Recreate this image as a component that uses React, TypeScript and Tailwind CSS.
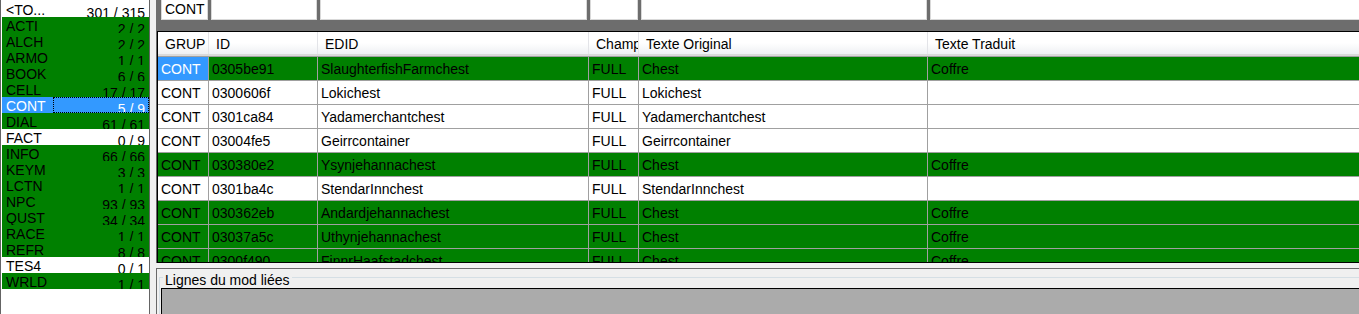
import React from "react";

type Grp = { l: string; n: string; k: "w" | "g" | "s" };
const groups: Grp[] = [
  { l: "<TO...", n: "301 / 315", k: "w" },
  { l: "ACTI", n: "2 / 2", k: "g" },
  { l: "ALCH", n: "2 / 2", k: "g" },
  { l: "ARMO", n: "1 / 1", k: "g" },
  { l: "BOOK", n: "6 / 6", k: "g" },
  { l: "CELL", n: "17 / 17", k: "g" },
  { l: "CONT", n: "5 / 9", k: "s" },
  { l: "DIAL", n: "61 / 61", k: "g" },
  { l: "FACT", n: "0 / 9", k: "w" },
  { l: "INFO", n: "66 / 66", k: "g" },
  { l: "KEYM", n: "3 / 3", k: "g" },
  { l: "LCTN", n: "1 / 1", k: "g" },
  { l: "NPC", n: "93 / 93", k: "g" },
  { l: "QUST", n: "34 / 34", k: "g" },
  { l: "RACE", n: "1 / 1", k: "g" },
  { l: "REFR", n: "8 / 8", k: "g" },
  { l: "TES4", n: "0 / 1", k: "w" },
  { l: "WRLD", n: "1 / 1", k: "g" },
];

type Row = { id: string; edid: string; orig: string; trad: string; g: boolean };
const rows: Row[] = [
  { id: "0305be91", edid: "SlaughterfishFarmchest", orig: "Chest", trad: "Coffre", g: true },
  { id: "0300606f", edid: "Lokichest", orig: "Lokichest", trad: "", g: false },
  { id: "0301ca84", edid: "Yadamerchantchest", orig: "Yadamerchantchest", trad: "", g: false },
  { id: "03004fe5", edid: "Geirrcontainer", orig: "Geirrcontainer", trad: "", g: false },
  { id: "030380e2", edid: "Ysynjehannachest", orig: "Chest", trad: "Coffre", g: true },
  { id: "0301ba4c", edid: "StendarInnchest", orig: "StendarInnchest", trad: "", g: false },
  { id: "030362eb", edid: "Andardjehannachest", orig: "Chest", trad: "Coffre", g: true },
  { id: "03037a5c", edid: "Uthynjehannachest", orig: "Chest", trad: "Coffre", g: true },
  { id: "0300f490", edid: "FinnrHaafstadchest", orig: "Chest", trad: "Coffre", g: true },
];

function GroupRow({ g }: { g: Grp }) {
  if (g.k === "s") {
    return (
      <div className="flex h-4 overflow-hidden bg-[#3399ff] text-white">
        <div className="w-[51px] shrink-0 pl-[4px] leading-4 translate-y-[1px]">{g.l}</div>
        <div className="flex-1 border border-dotted border-black flex justify-end pr-[3px] overflow-hidden">
          <span className="leading-4 translate-y-[3px]">{g.n}</span>
        </div>
      </div>
    );
  }
  const bg = g.k === "g" ? "bg-[#008000]" : "bg-white";
  return (
    <div className={`flex h-4 overflow-hidden justify-between pl-[4px] pr-[4px] text-black ${bg}`}>
      <span className="leading-4 translate-y-[1px]">{g.l}</span>
      <span className="leading-4 translate-y-[4px]">{g.n}</span>
    </div>
  );
}

function Cell({ w, children, cls = "" }: { w: string; children?: React.ReactNode; cls?: string }) {
  return (
    <div className={`${w} shrink-0 h-full border-r border-[#a0a0a0] pl-[3px] leading-[25px] whitespace-nowrap overflow-hidden ${cls}`}>
      {children}
    </div>
  );
}

function HCell({ w, children }: { w: string; children?: React.ReactNode }) {
  return (
    <div className={`${w} shrink-0 h-full border-r border-[#e3e4e8] pl-[7px] leading-[24px] whitespace-nowrap overflow-hidden`}>
      {children}
    </div>
  );
}

export default function App() {
  return (
    <div
      className="w-[1359px] h-[314px] flex bg-[#f0f0f0] overflow-hidden text-[14px] text-black"
      style={{ fontFamily: '"Liberation Sans", Arial, sans-serif' }}
    >
      {/* left list */}
      <div className="w-[150px] h-full shrink-0 bg-white border-l border-r border-[#646464] pt-[1px] pl-[1px]">
        {groups.map((g) => (
          <GroupRow key={g.l} g={g} />
        ))}
      </div>

      {/* main */}
      <div className="ml-[6px] flex-1 h-full flex flex-col">
        {/* filter band */}
        <div className="h-[31px] shrink-0 bg-[#6d6d6d] flex gap-[3px] pl-[5px]">
          <div className="w-[47px] h-[20px] bg-white border-x border-b border-[#d9d9d9] pl-[3px] leading-[19px]">CONT</div>
          <div className="w-[106px] h-[20px] bg-white border-x border-b border-[#d9d9d9]" />
          <div className="w-[267px] h-[20px] bg-white border-x border-b border-[#d9d9d9]" />
          <div className="w-[48px] h-[20px] bg-white border-x border-b border-[#d9d9d9]" />
          <div className="w-[286px] h-[20px] bg-white border-x border-b border-[#d9d9d9]" />
          <div className="flex-1 h-[20px] bg-white border-l border-b border-[#d9d9d9]" />
        </div>

        {/* grid */}
        <div className="h-[232px] shrink-0 border-l border-[#696969] ">
          <div className="h-full ml-0 border-t border-b border-l border-black bg-white overflow-hidden">
            <div className="h-[25px] border-b border-[#a0a0a0]">
              <div className="h-full flex bg-linear-to-b from-white via-white to-[#eef0f3] border-b-2 border-[#dadada]">
                <HCell w="w-[51px]">GRUP</HCell>
                <HCell w="w-[109px]">ID</HCell>
                <HCell w="w-[271px]">EDID</HCell>
                <HCell w="w-[50px]">Champ</HCell>
                <HCell w="w-[289px]">Texte Original</HCell>
                <div className="flex-1 pl-[7px] leading-[24px]">Texte Traduit</div>
              </div>
            </div>
            {rows.map((r, i) => (
              <div
                key={r.id}
                className={`h-[24px] flex border-b border-[#a0a0a0] ${r.g ? "bg-[#008000]" : "bg-white"}`}
              >
                <Cell w="w-[51px]" cls={i === 0 ? "bg-[#3399ff] text-white" : ""}>CONT</Cell>
                <Cell w="w-[109px]">{r.id}</Cell>
                <Cell w="w-[271px]">{r.edid}</Cell>
                <Cell w="w-[50px]">FULL</Cell>
                <Cell w="w-[289px]">{r.orig}</Cell>
                <div className="flex-1 pl-[3px] leading-[25px] whitespace-nowrap overflow-hidden">{r.trad}</div>
              </div>
            ))}
          </div>
        </div>

        {/* linked lines */}
        <div className="flex-1 pt-[5px] flex flex-col">
          <div className="flex-1 border-t border-l border-[#696969] pl-[2px] pt-[8px] flex flex-col">
            <div className="relative flex-1 border-t border-l border-[#d5dfe5] flex flex-col">
              <div className="absolute top-[-6px] left-[3px] px-[2px] bg-[#f0f0f0] leading-4">Lignes du mod liées</div>
              <div className="flex-1 mt-[10px] ml-[1px] border-t border-l border-black bg-[#ababab]" />
            </div>
          </div>
        </div>
      </div>
    </div>
  );
}
